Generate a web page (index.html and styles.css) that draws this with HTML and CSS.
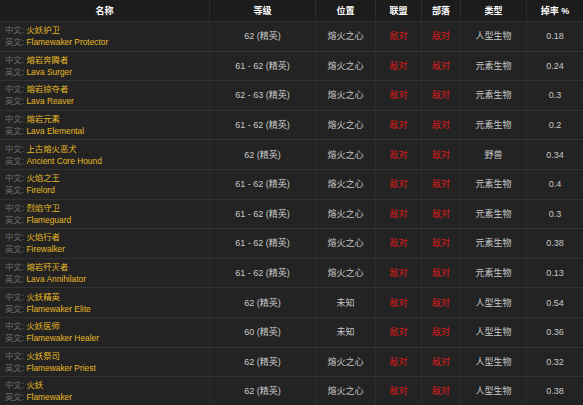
FILE: index.html
```html
<!DOCTYPE html>
<html lang="zh-CN">
<head>
  <meta charset="utf-8">
  <title>熔火之心 怪物列表</title>
  <link rel="stylesheet" href="styles.css">
</head>
<body>
  <div class="npc-table">
    <div class="row head">
      <div class="cell name-col">名称</div>
      <div class="cell">等级</div>
      <div class="cell">位置</div>
      <div class="cell">联盟</div>
      <div class="cell">部落</div>
      <div class="cell">类型</div>
      <div class="cell">掉率 %</div>
    </div>

    <div class="row">
      <div class="cell name-col"><div><span class="lbl">中文:</span> <span class="nm">火妖护卫</span></div><div><span class="lbl">英文:</span> <span class="nm">Flamewaker Protector</span></div></div>
      <div class="cell">62 (精英)</div><div class="cell">熔火之心</div><div class="cell hostile">敌对</div><div class="cell hostile">敌对</div><div class="cell">人型生物</div><div class="cell">0.18</div>
    </div>
    <div class="row">
      <div class="cell name-col"><div><span class="lbl">中文:</span> <span class="nm">熔岩奔腾者</span></div><div><span class="lbl">英文:</span> <span class="nm">Lava Surger</span></div></div>
      <div class="cell">61 - 62 (精英)</div><div class="cell">熔火之心</div><div class="cell hostile">敌对</div><div class="cell hostile">敌对</div><div class="cell">元素生物</div><div class="cell">0.24</div>
    </div>
    <div class="row">
      <div class="cell name-col"><div><span class="lbl">中文:</span> <span class="nm">熔岩掠夺者</span></div><div><span class="lbl">英文:</span> <span class="nm">Lava Reaver</span></div></div>
      <div class="cell">62 - 63 (精英)</div><div class="cell">熔火之心</div><div class="cell hostile">敌对</div><div class="cell hostile">敌对</div><div class="cell">元素生物</div><div class="cell">0.3</div>
    </div>
    <div class="row">
      <div class="cell name-col"><div><span class="lbl">中文:</span> <span class="nm">熔岩元素</span></div><div><span class="lbl">英文:</span> <span class="nm">Lava Elemental</span></div></div>
      <div class="cell">61 - 62 (精英)</div><div class="cell">熔火之心</div><div class="cell hostile">敌对</div><div class="cell hostile">敌对</div><div class="cell">元素生物</div><div class="cell">0.2</div>
    </div>
    <div class="row">
      <div class="cell name-col"><div><span class="lbl">中文:</span> <span class="nm">上古熔火恶犬</span></div><div><span class="lbl">英文:</span> <span class="nm">Ancient Core Hound</span></div></div>
      <div class="cell">62 (精英)</div><div class="cell">熔火之心</div><div class="cell hostile">敌对</div><div class="cell hostile">敌对</div><div class="cell">野兽</div><div class="cell">0.34</div>
    </div>
    <div class="row">
      <div class="cell name-col"><div><span class="lbl">中文:</span> <span class="nm">火焰之王</span></div><div><span class="lbl">英文:</span> <span class="nm">Firelord</span></div></div>
      <div class="cell">61 - 62 (精英)</div><div class="cell">熔火之心</div><div class="cell hostile">敌对</div><div class="cell hostile">敌对</div><div class="cell">元素生物</div><div class="cell">0.4</div>
    </div>
    <div class="row">
      <div class="cell name-col"><div><span class="lbl">中文:</span> <span class="nm">烈焰守卫</span></div><div><span class="lbl">英文:</span> <span class="nm">Flameguard</span></div></div>
      <div class="cell">61 - 62 (精英)</div><div class="cell">熔火之心</div><div class="cell hostile">敌对</div><div class="cell hostile">敌对</div><div class="cell">元素生物</div><div class="cell">0.3</div>
    </div>
    <div class="row">
      <div class="cell name-col"><div><span class="lbl">中文:</span> <span class="nm">火焰行者</span></div><div><span class="lbl">英文:</span> <span class="nm">Firewalker</span></div></div>
      <div class="cell">61 - 62 (精英)</div><div class="cell">熔火之心</div><div class="cell hostile">敌对</div><div class="cell hostile">敌对</div><div class="cell">元素生物</div><div class="cell">0.38</div>
    </div>
    <div class="row">
      <div class="cell name-col"><div><span class="lbl">中文:</span> <span class="nm">熔岩歼灭者</span></div><div><span class="lbl">英文:</span> <span class="nm">Lava Annihilator</span></div></div>
      <div class="cell">61 - 62 (精英)</div><div class="cell">熔火之心</div><div class="cell hostile">敌对</div><div class="cell hostile">敌对</div><div class="cell">元素生物</div><div class="cell">0.13</div>
    </div>
    <div class="row">
      <div class="cell name-col"><div><span class="lbl">中文:</span> <span class="nm">火妖精英</span></div><div><span class="lbl">英文:</span> <span class="nm">Flamewaker Elite</span></div></div>
      <div class="cell">62 (精英)</div><div class="cell">未知</div><div class="cell hostile">敌对</div><div class="cell hostile">敌对</div><div class="cell">人型生物</div><div class="cell">0.54</div>
    </div>
    <div class="row">
      <div class="cell name-col"><div><span class="lbl">中文:</span> <span class="nm">火妖医师</span></div><div><span class="lbl">英文:</span> <span class="nm">Flamewaker Healer</span></div></div>
      <div class="cell">60 (精英)</div><div class="cell">未知</div><div class="cell hostile">敌对</div><div class="cell hostile">敌对</div><div class="cell">人型生物</div><div class="cell">0.36</div>
    </div>
    <div class="row">
      <div class="cell name-col"><div><span class="lbl">中文:</span> <span class="nm">火妖祭司</span></div><div><span class="lbl">英文:</span> <span class="nm">Flamewaker Priest</span></div></div>
      <div class="cell">62 (精英)</div><div class="cell">熔火之心</div><div class="cell hostile">敌对</div><div class="cell hostile">敌对</div><div class="cell">人型生物</div><div class="cell">0.32</div>
    </div>
    <div class="row">
      <div class="cell name-col"><div><span class="lbl">中文:</span> <span class="nm">火妖</span></div><div><span class="lbl">英文:</span> <span class="nm">Flamewaker</span></div></div>
      <div class="cell">62 (精英)</div><div class="cell">熔火之心</div><div class="cell hostile">敌对</div><div class="cell hostile">敌对</div><div class="cell">人型生物</div><div class="cell">0.38</div>
    </div>
  </div>
</body>
</html>
```

FILE: styles.css
```css
html, body {
  margin: 0;
  padding: 0;
  background-color: #232323;
}
body {
  font-family: "Liberation Sans", "Noto Sans CJK SC", sans-serif;
  font-size: 9px;
  color: #c8c8c8;
  overflow: hidden;
}
.npc-table {
  width: 583px;
}
.row {
  display: grid;
  grid-template-columns: 209px 106px 60px 46px 39px 66px 57px;
  height: 29.6px;
  border-top: 1px solid #333333;
  box-sizing: border-box;
}
.row.head {
  height: 21px;
  border-top: none;
  background-color: #1c1c1c;
  color: #ffffff;
  font-weight: bold;
}
.cell {
  display: flex;
  align-items: center;
  justify-content: center;
  border-left: 1px solid #2c2c2c;
  line-height: 12px;
}
.cell:first-child {
  border-left: none;
}
.name-col {
  flex-direction: column;
  align-items: flex-start;
  justify-content: center;
  padding-left: 5px;
  font-size: 8.4px;
}
.row.head .name-col {
  align-items: center;
  padding-left: 0;
  font-size: 9px;
}
.lbl {
  color: #6e6e6e;
}
.nm {
  color: #e6b925;
}
.hostile {
  color: #d81a1a;
}
```
